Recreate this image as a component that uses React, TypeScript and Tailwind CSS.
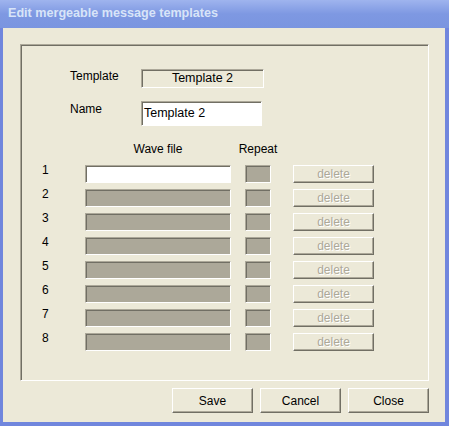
const sunken = 'border-t border-l border-t-[#aca899] border-l-[#aca899] border-b border-r border-b-white border-r-white shadow-[inset_1px_1px_0_#716f64]';
const raised = 'border-t border-l border-t-white border-l-white border-b border-r border-b-[#716f64] border-r-[#716f64] shadow-[inset_-1px_-1px_0_#aca899] bg-[#ece9d8]';

function Row({ n, active }: { n: number; active?: boolean }) {
  return (
    <div className="flex h-[24px] items-start">
      <div className="w-[43px] leading-[14px]">{n}</div>
      <div className={`mt-[2px] h-[18px] w-[146px] ${sunken} ${active ? 'bg-white' : 'bg-[#aca899]'}`} />
      <div className={`ml-[14px] mt-[2px] h-[18px] w-[26px] ${sunken} bg-[#aca899]`} />
      <button
        className={`ml-[22px] mt-[2px] flex h-[18px] w-[81px] items-center justify-center text-[#aca899] [text-shadow:1px_1px_0_#fff] ${raised}`}
      >
        delete
      </button>
    </div>
  );
}

export default function App() {
  return (
    <div className="flex h-[426px] w-[449px] flex-col bg-[#7086dd] font-['Liberation_Sans',Arial,sans-serif] text-[12px] text-black">
      {/* title bar */}
      <div className="flex h-[28px] shrink-0 items-center bg-gradient-to-b from-[#9fb4ee] via-[#7e98e2] to-[#7a95e0] pl-[8px] pb-[1px]">
        <span className="text-[12.6px] font-bold text-[#d8e4f8]">Edit mergeable message templates</span>
      </div>

      <div className="ml-[3px] mr-[4px] mb-[4px] flex flex-1 flex-col bg-[#ece9d8] pl-[17px] pt-[16px]">
        {/* group box */}
        <div className={`flex h-[337px] w-[409px] flex-col pl-[49px] pt-[24px] ${sunken}`}>
          <div className="flex items-start">
            <div className="w-[71px] leading-[14px]">Template</div>
            <div className={`flex h-[19px] w-[123px] items-center justify-center text-[12.5px] ${sunken}`}>Template 2</div>
          </div>
          <div className="mt-[13px] flex items-start">
            <div className="w-[71px] pt-[1px] leading-[14px]">Name</div>
            <div className={`flex h-[25px] w-[121px] items-center bg-white pl-[2px] text-[12.5px] ${sunken}`}>Template 2</div>
          </div>

          <div className="mt-[16px] flex h-[21px] items-start pl-[15px] leading-[14px]">
            <div className="w-[146px] text-center">Wave file</div>
            <div className="ml-[6px] w-[42px] text-center">Repeat</div>
          </div>

          <div className="-ml-[28px] flex flex-col">
            {[1, 2, 3, 4, 5, 6, 7, 8].map((n) => (
              <Row key={n} n={n} active={n === 1} />
            ))}
          </div>
        </div>

        {/* buttons */}
        <div className="mt-[7px] flex w-[409px] justify-end gap-[7px]">
          {['Save', 'Cancel', 'Close'].map((b) => (
            <button key={b} className={`flex h-[25px] w-[81px] items-center justify-center ${raised}`}>
              {b}
            </button>
          ))}
        </div>
      </div>
    </div>
  );
}
